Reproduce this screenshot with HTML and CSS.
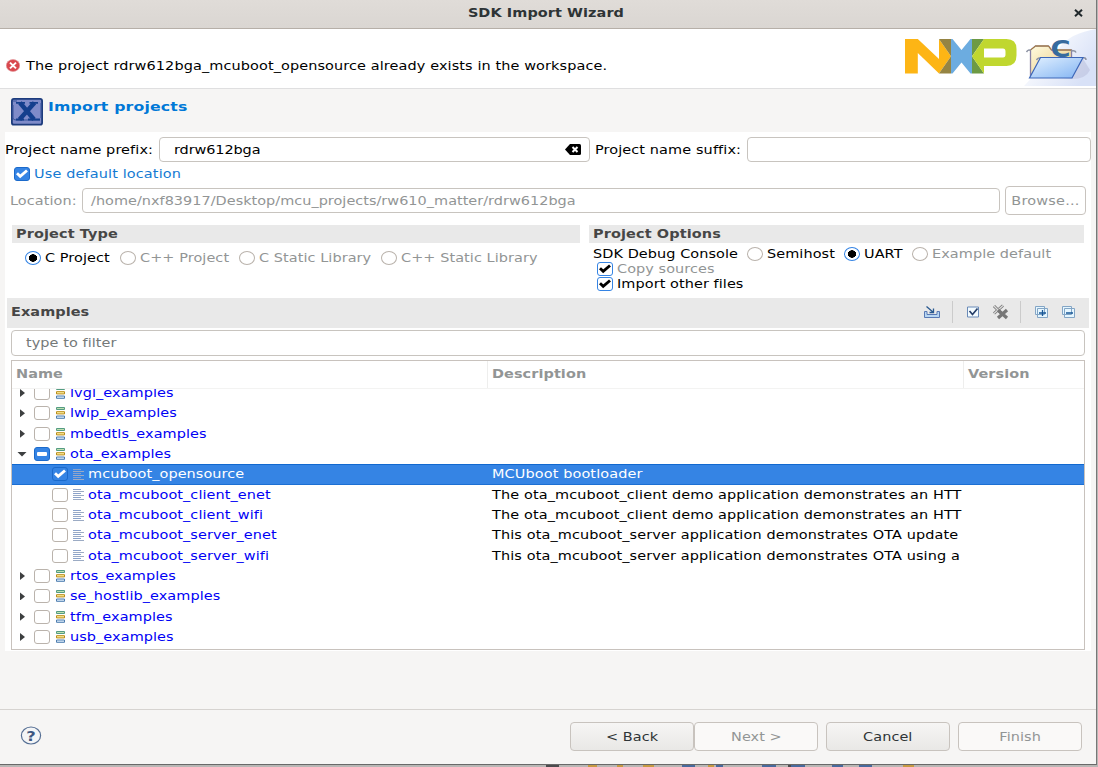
FILE: index.html
```html
<!DOCTYPE html>
<html lang="en">
<head>
<meta charset="utf-8">
<title>SDK Import Wizard</title>
<link rel="stylesheet" href="styles.css">
</head>
<body>
<svg class="defs" width="0" height="0" aria-hidden="true">
  <defs>
    <linearGradient id="sky" x1="0" y1="0" x2="1" y2="1"><stop offset="0" stop-color="#e3f1ff"/><stop offset="1" stop-color="#82b4f3"/></linearGradient>
    <linearGradient id="paper" x1="0" y1="0" x2="1" y2="1"><stop offset="0" stop-color="#fffbe0"/><stop offset="1" stop-color="#e9c77c"/></linearGradient>
    <linearGradient id="glow" x1="0" y1="0" x2="1" y2=".6"><stop offset=".2" stop-color="#fff"/><stop offset="1" stop-color="#d8e1f7"/></linearGradient>
    <symbol id="group" viewBox="0 0 9 12">
      <path d="M.5.5h8v2h-8z" fill="#bfe0b0" stroke="#549c82"/>
      <path d="M.5 4.7h8v2.2h-8z" fill="#fff0a0" stroke="#b88a16"/>
      <path d="M.5 9h8v2.3h-8z" fill="#dcecfa" stroke="#4c7cae"/>
    </symbol>
    <symbol id="doc" viewBox="0 0 12 11">
      <path d="M0 .5h8M0 4.500h8M0 8.500h8" stroke="#8aa2cb"/>
      <path d="M0 2.500h11M0 6.500h11M0 10.500h11" stroke="#9cabc4"/>
    </symbol>
    <symbol id="tick" viewBox="0 0 12 10"><path d="M1 4.3 4.2 7.3 11 1.5" fill="none" stroke="currentColor" stroke-width="2.900"/></symbol>
  </defs>
</svg>
<div class="window">
  <header class="titlebar"><b class="t mid">SDK Import Wizard</b>
    <svg class="close" width="9" height="8" viewBox="0 0 9 8"><path d="m1 .8 7 6.4M8 .8 1 7.2" stroke="#20282b" stroke-width="2"/></svg>
  </header>
  <section class="banner">
    <svg class="error" width="14" height="13" viewBox="0 0 14 13"><ellipse cx="7" cy="6.5" rx="6.7" ry="6" fill="#d9484e" stroke="#e29a9d" stroke-width=".7"/><path d="m4 3.6 6 5.8M10 3.6 4 9.4" stroke="#fff" stroke-width="2"/></svg>
    <span class="t message">The project rdrw612bga_mcuboot_opensource already exists in the workspace.</span>
    <svg class="logo" width="112" height="35" viewBox="0 0 112 35">
      <path d="M0 0h12.8L34 20V0l12 17.3L34 34.5 12.8 14v20.500H0z" fill="#fdb515"/>
      <path d="M34 0h12v17.3zM34 34.5h12V17.3z" fill="#958443"/>
      <path d="M46 0h1.5L56.500 11 65.500 0H67v34.500h-1.500L56.500 23.500l-9 11H46z" fill="#6cace0"/>
      <path d="M67 0h12L67 17.3zM67 17.3l12 17.2H67z" fill="#6d9a44"/>
      <path fill-rule="evenodd" d="M79 0h22.500Q111.500 0 111.500 10v6.500q0 10.500-10 10.500H79v7.500L67 17.300zM79 9.500v9h19q2.500 0 2.500-3v-3q0-3-2.500-3z" fill="#c0d72f"/>
    </svg>
    <svg class="folder" width="72" height="57" viewBox="0 0 72 57">
      <path d="M72 0Q47 4 36 18L0 57h72z" fill="url(#glow)"/>
      <path d="M38 49 58 28l8 13q-4 9-18 9z" fill="#a5a9cb" opacity=".35"/>
      <path d="M6.500 47V21l5-4h13l3 4h20v13" fill="url(#paper)" stroke="#8880a6" stroke-width="1.300"/>
      <path d="M6.500 21l5-4h13l3 4h20" fill="none" stroke="#b17d25"/>
      <path d="M2.500 23q2-3 4-1.500M47 22q4-1 5 1.500M12.500 31q2-3 4-1.500M58 29q4-1 4 2" fill="none" stroke="#8b91a2" stroke-width="1.500"/>
      <text x="26.500" y="28" textLength="20" lengthAdjust="spacingAndGlyphs">C</text>
      <path d="M16.500 28.500h42.500L48 49H5.500z" fill="url(#sky)" stroke="#3d66b8" stroke-width="1.200"/>
    </svg>
  </section>
  <section class="heading">
    <svg width="32" height="28" viewBox="0 0 32 28"><rect x=".9" y=".9" width="30.200" height="25.800" rx="2" fill="#7f8bc9" stroke="#1d3c7d" stroke-width="1.800"/><path d="M2 3h4M30 5v15M2 7v13q0 2 3 2h24" fill="none" stroke="#36539a"/><path d="M9 4.800 23 21.500M23.500 4.800 8.500 21.500" stroke="#143f8d" stroke-width="4.500"/><path d="M5 4.800h9M18.500 4.800H27M5 21.500h8M17 21.500h12" stroke="#143f8d" stroke-width="1.800"/></svg>
    <b class="t">Import projects</b>
  </section>
  <main class="form">
    <div class="names">
      <label class="t prefix-label">Project name prefix:</label>
      <div class="field prefix"><span class="t">rdrw612bga</span><svg width="16" height="11" viewBox="0 0 16 11"><path d="M0 5.500 5 0h9.500Q16 0 16 1.500v8q0 1.500-1.500 1.500H5z"/><path d="m7.500 3 5 5m0-5-5 5" stroke="#fff" stroke-width="2"/></svg></div>
      <label class="t suffix-label">Project name suffix:</label>
      <div class="field suffix"></div>
    </div>
    <div class="default"><i class="box on"><svg><use href="#tick"/></svg></i><span class="t">Use default location</span></div>
    <div class="location">
      <label class="t">Location:</label>
      <div class="field path"><span class="t">/home/nxf83917/Desktop/mcu_projects/rw610_matter/rdrw612bga</span></div>
      <button class="browse"><span class="t mid">Browse...</span></button>
    </div>
    <div class="settings">
      <section>
        <h2><span class="t">Project Type</span></h2>
        <div class="types">
          <i class="radio sel"></i><span class="t">C Project</span>
          <i class="radio"></i><span class="t off">C++ Project</span>
          <i class="radio"></i><span class="t off">C Static Library</span>
          <i class="radio"></i><span class="t off">C++ Static Library</span>
        </div>
      </section>
      <section>
        <h2><span class="t">Project Options</span></h2>
        <div class="console">
          <span class="t">SDK Debug Console</span>
          <i class="radio"></i><span class="t">Semihost</span>
          <i class="radio sel"></i><span class="t">UART</span>
          <i class="radio"></i><span class="t off">Example default</span>
        </div>
        <div class="option"><i class="box ring"><svg><use href="#tick"/></svg></i><span class="t off">Copy sources</span></div>
        <div class="option"><i class="box ring"><svg><use href="#tick"/></svg></i><span class="t">Import other files</span></div>
      </section>
    </div>
    <div class="examples-bar">
      <b class="t">Examples</b>
      <svg class="tools" width="160" height="24" viewBox="0 0 160 24">
        <path d="M4 11.500H1.500v6h15v-6H14v3H4v-3z" fill="#b8d7f3" stroke="#5878b3"/><path d="m3.500 6.500 7 6M6.500 12.500h4v-4" fill="none" stroke="#28588f" stroke-width="1.300"/>
        <path d="M29.500 1v22M97.500 1v22" stroke="#cbcbcb"/>
        <path d="M44.500 7h11v10h-11z" fill="#f3fbff" stroke="#6a8bb8"/><path d="m46.500 11 3 3.500 5-6" fill="none" stroke="#243d68" stroke-width="1.700"/>
        <path d="m71 6 9 9m0-9.500-9 8" stroke="#777" stroke-width="3"/><path d="m71 6 9 9m0-9.500-9 8" stroke="#ddd" stroke-width="1.300"/><path d="m75 10 9 8m0-8-9 8" stroke="#777" stroke-width="3.300"/>
        <g fill="#e5f6ff" stroke="#83a5c5"><path d="M112.500 6.500h9v8h-9zM114.500 8.500h10v9h-10zM139.500 6.500h9v8h-9zM141.500 8.500h10v9h-10z"/></g>
        <path d="M116 13h7M119.500 10v6M143 13h7" stroke="#175797" stroke-width="1.300"/>
      </svg>
    </div>
    <div class="field filter"><span class="t">type to filter</span></div>
    <div class="table">
      <div class="cols"><div><b class="t">Name</b></div><div><b class="t">Description</b></div><div><b class="t">Version</b></div></div>
      <div class="rows">
        <div class="row"><i class="arrow"></i><i class="box"></i><svg class="g"><use href="#group"/></svg><span class="t">lvgl_examples</span></div>
        <div class="row"><i class="arrow"></i><i class="box"></i><svg class="g"><use href="#group"/></svg><span class="t">lwip_examples</span></div>
        <div class="row"><i class="arrow"></i><i class="box"></i><svg class="g"><use href="#group"/></svg><span class="t">mbedtls_examples</span></div>
        <div class="row"><i class="arrow open"></i><i class="box on mixed"></i><svg class="g"><use href="#group"/></svg><span class="t">ota_examples</span></div>
        <div class="row child picked"><i class="box on"><svg><use href="#tick"/></svg></i><svg class="d"><use href="#doc"/></svg><span class="t">mcuboot_opensource</span><span class="t desc">MCUboot bootloader</span></div>
        <div class="row child"><i class="box"></i><svg class="d"><use href="#doc"/></svg><span class="t">ota_mcuboot_client_enet</span><span class="t desc">The ota_mcuboot_client demo application demonstrates an HTT</span></div>
        <div class="row child"><i class="box"></i><svg class="d"><use href="#doc"/></svg><span class="t">ota_mcuboot_client_wifi</span><span class="t desc">The ota_mcuboot_client demo application demonstrates an HTT</span></div>
        <div class="row child"><i class="box"></i><svg class="d"><use href="#doc"/></svg><span class="t">ota_mcuboot_server_enet</span><span class="t desc">This ota_mcuboot_server application demonstrates OTA update</span></div>
        <div class="row child"><i class="box"></i><svg class="d"><use href="#doc"/></svg><span class="t">ota_mcuboot_server_wifi</span><span class="t desc">This ota_mcuboot_server application demonstrates OTA using a</span></div>
        <div class="row"><i class="arrow"></i><i class="box"></i><svg class="g"><use href="#group"/></svg><span class="t">rtos_examples</span></div>
        <div class="row"><i class="arrow"></i><i class="box"></i><svg class="g"><use href="#group"/></svg><span class="t">se_hostlib_examples</span></div>
        <div class="row"><i class="arrow"></i><i class="box"></i><svg class="g"><use href="#group"/></svg><span class="t">tfm_examples</span></div>
        <div class="row"><i class="arrow"></i><i class="box"></i><svg class="g"><use href="#group"/></svg><span class="t">usb_examples</span></div>
      </div>
    </div>
  </main>
  <footer class="actions">
    <svg class="help" width="22" height="19" viewBox="0 0 22 19"><ellipse cx="11" cy="9.500" rx="9.600" ry="8.500" fill="#f4f5f6" stroke="#566f94" stroke-width="1.200"/><text x="6.300" y="14.500" textLength="9.500" lengthAdjust="spacingAndGlyphs">?</text></svg>
    <button><span class="t mid">&lt; Back</span></button>
    <button disabled><span class="t mid">Next &gt;</span></button>
    <button class="apart"><span class="t mid">Cancel</span></button>
    <button class="last" disabled><span class="t mid">Finish</span></button>
  </footer>
</div>
<svg class="under" width="1098" height="2" viewBox="0 0 1098 2">
  <path d="M546 1h13M788 1h13" stroke="#4b4b4d" stroke-width="2"/>
  <path d="M588 1h9M617 1h6M643 1h11M708 1h6M903 1h11" stroke="#c79a42" stroke-width="2"/>
  <path d="M682 1h13M716 1h7M762 1h14M791 1h14M832 1h11M859 1h13" stroke="#496a9d" stroke-width="2"/>
</svg>
</body>
</html>
```
FILE: styles.css
```css
* { box-sizing: border-box; }
body { margin: 0; width: 1098px; height: 767px; overflow: hidden; background: #b9b7b5; font: 13.33px/20px "DejaVu Sans", sans-serif; color: #000; }
.defs { position: absolute; }
.t { display: inline-block; transform: translateY(.9px) scale(1.085, .86); transform-origin: 0 50%; letter-spacing: .06px; white-space: nowrap; }
.mid { transform-origin: 50% 50%; }
b, h2 { font-weight: bold; }
svg { display: block; flex: none; }
.window { width: 1097px; height: 765px; background: #f6f5f4; border-right: 1px solid #777; border-bottom: 1px solid #696969; display: flex; flex-direction: column; }
.titlebar { flex: none; height: 29px; padding: 0 13px 2px 8px; display: grid; grid-template-columns: 1fr auto 1fr; align-items: center; background: linear-gradient(#e0dcd8, #dad6d2); border-bottom: 1px solid #b6afa8; color: #2e3436; }
.titlebar .t { grid-column: 2; }
.close { justify-self: end; }
.banner { flex: none; height: 60px; background: #fff; border-bottom: 1px solid #dfdfe0; display: flex; align-items: flex-start; padding-left: 6px; }
.error { margin-top: 30px; }
.message { margin: 27px 0 0 6px; letter-spacing: .09px; }
.logo { margin: 10px 7px 0 auto; }
.folder text { font: bold 23px "DejaVu Sans", sans-serif; fill: #376b9e; }
.heading { flex: none; height: 43px; padding: 9px 0 0 11px; display: flex; gap: 5px; color: #0078d7; }
.heading .t { font-size: 14.5px; line-height: 20px; margin-top: -3px; letter-spacing: .14px; }
.form { flex: none; width: 1086px; height: 519px; margin-left: 5px; background: #fff; padding-top: 5px; }
.field { height: 25px; border: 1px solid #c8c4bf; border-radius: 4px; background: #fff; display: flex; align-items: center; }
.names { display: flex; align-items: center; height: 25px; }
.prefix-label { width: 154px; letter-spacing: .1px; }
.prefix { width: 431px; padding: 0 8px 0 14px; justify-content: space-between; }
.prefix .t { letter-spacing: -.1px; }
.suffix-label { width: 157px; padding-left: 4.500px; letter-spacing: .1px; }
.suffix { width: 344px; }
.box { flex: none; width: 16px; height: 14px; border: 1px solid #bab3ac; border-radius: 3px; background: #fff; display: flex; align-items: center; justify-content: center; }
.box svg { width: 12px; height: 10px; }
.box.on { background: #3584e4; border-color: #1b6acb; color: #fff; }
.box.ring { border-color: #3584e4; }
.default { display: flex; align-items: center; height: 24px; padding-left: 9px; gap: 4px; color: #147ad3; }
.default .t { letter-spacing: .12px; }
.location { display: flex; align-items: center; height: 29px; padding-left: 5px; color: #929595; }
.location label { width: 72px; }
.path { width: 918px; padding-left: 8px; margin-right: 5px; }
.path .t { letter-spacing: .01px; }
button { font: inherit; padding: 0; border: 1px solid #c8c3be; border-radius: 4px; background: linear-gradient(#f6f5f4, #e9e8e6); color: #2e3436; display: flex; align-items: center; justify-content: center; height: 29px; width: 124px; }
button:disabled, .browse { background: #faf9f8; color: #929595; }
.browse { width: 81px; background: #fff; }
.browse .t { letter-spacing: .18px; }
.settings { display: grid; grid-template-columns: 568px 495px; column-gap: 9px; padding: 10px 0 0 7px; height: 83px; }
h2 { margin: 0; height: 18px; padding-left: 4px; background: #e9e9e9; color: #464646; font-size: 13.33px; line-height: 18px; display: flex; align-items: center; }
h2 .t { letter-spacing: .1px; }
.off { color: #929595; }
.radio { flex: none; width: 16px; height: 14px; border: 1px solid #bab3ac; border-radius: 50%; background: #fff; }
.radio.sel { border-color: #3584e4; background: radial-gradient(ellipse 4.5px 3.900px, #000 90%, #fff 100%); }
.types { display: grid; grid-template-columns: 16px 79px 16px 103px 16px 126px 16px 140px; align-items: center; height: 30px; padding-left: 13px; }
.radio + .t { margin-left: 4px; }
.console { display: grid; grid-template-columns: 154px 16px 81px 16px 52px 16px 130px; align-items: center; height: 22px; padding-left: 4px; margin-bottom: -3.600px; }
.option { display: flex; align-items: center; gap: 4px; height: 15.300px; padding-left: 8px; }
.examples-bar { height: 30px; margin: 0 2px; padding: 0 6px 3px 4px; background: #e9e9e9; color: #464646; display: flex; align-items: center; justify-content: space-between; }
.filter { margin: 2px 6px 0; height: 26px; padding-left: 14px; color: #747979; }
.table { margin: 4px 6px 0; height: 290px; border: 1px solid #c8c2bd; }
.cols { display: grid; grid-template-columns: 475px 476px 1fr; height: 28px; border-bottom: 1px solid #f3f3f2; color: #929595; line-height: 26px; }
.cols div { padding-left: 4px; }
.cols div + div { border-left: 1px solid #eeeeed; }
.rows { height: 260px; overflow: hidden; }
.row { height: 20.350px; display: flex; align-items: center; padding-left: 8px; color: #0000f5; position: relative; }
.row:first-child { margin-top: -6.200px; }
.arrow { width: 5px; height: 8px; margin: 0 9px 0 0; background: #3d3f40; clip-path: polygon(0 0, 100% 50%, 0 100%); }
.arrow.open { width: 10px; height: 5px; margin: 0 7px 0 -3px; clip-path: polygon(0 0, 100% 0, 50% 100%); }
.g { width: 9px; height: 12px; margin: 0 5px 0 6px; }
.child { padding-left: 40px; }
.d { width: 12px; height: 11px; margin: 0 3px 0 5px; }
.mixed::before { content: ""; width: 10px; height: 4px; border-radius: 1px; background: #fff; }
.picked { background: #3584e4; color: #fff; box-shadow: inset 0 1px #1168cf, inset 0 -1px #1c6fd3; }
/* The description column starts at a fixed offset, whatever the tree indent. */
.desc { position: absolute; left: 480px; color: #000; letter-spacing: .1px; }
.picked .desc { color: #fff; }
.actions { flex: none; margin-top: 58px; height: 55px; border-top: 1px solid #d6d3d0; display: flex; align-items: center; padding: 0 14px 1px 20px; }
.actions button:first-of-type { margin-left: auto; }
.apart { margin: 0 8px; }
.help { margin-bottom: 2px; }
.help text { font: bold 14px "DejaVu Sans", sans-serif; fill: #3e5781; }
```
